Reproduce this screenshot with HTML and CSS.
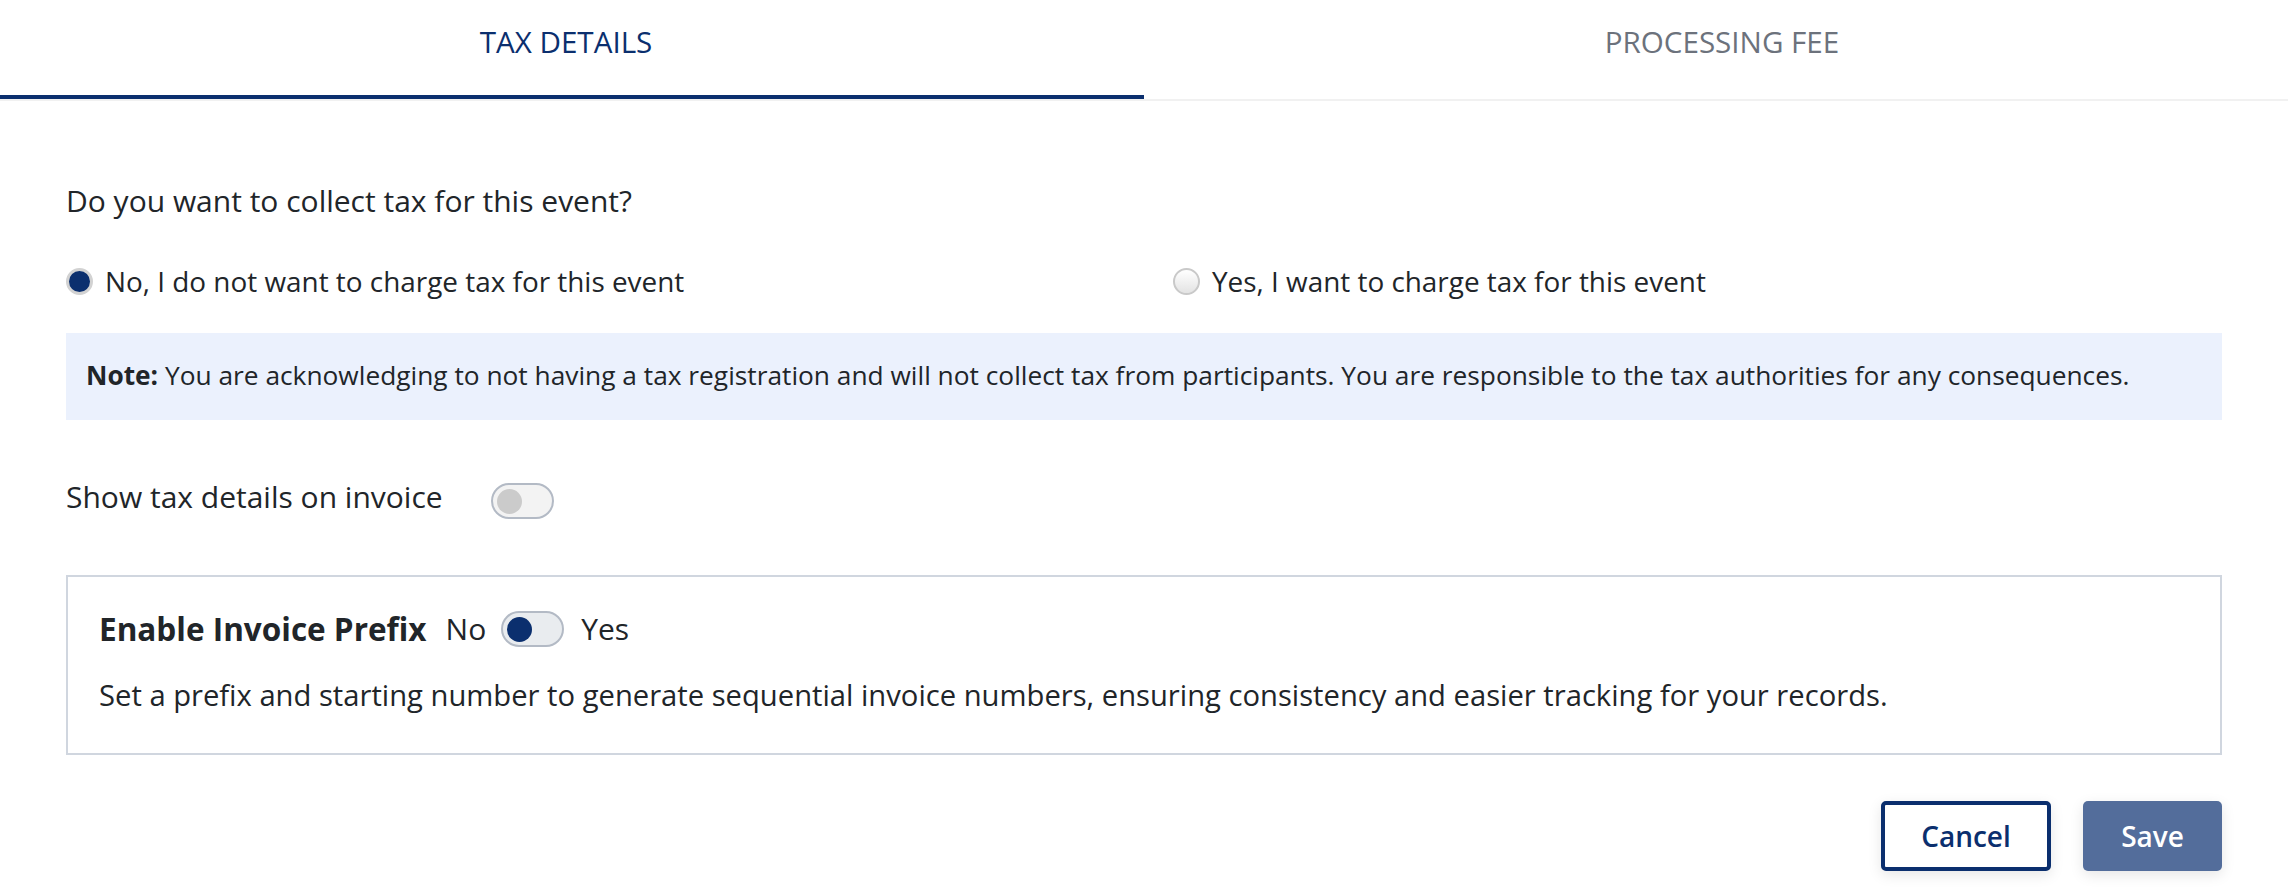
FILE: index.html
```html
<!DOCTYPE html>
<html lang="en">
<head>
<meta charset="utf-8">
<title>Tax Details</title>
<link rel="stylesheet" href="styles.css">
</head>
<body>
<nav class="tabs">
  <div class="tab active">TAX DETAILS</div>
  <div class="tab">PROCESSING FEE</div>
</nav>
<main class="content">
  <p class="question">Do you want to collect tax for this event?</p>
  <div class="radio-grid">
    <label class="radio"><span class="radio-dot checked"></span>No, I do not want to charge tax for this event</label>
    <label class="radio"><span class="radio-dot"></span>Yes, I want to charge tax for this event</label>
  </div>
  <div class="note"><strong>Note:</strong> You are acknowledging to not having a tax registration and will not collect tax from participants. You are responsible to the tax authorities for any consequences.</div>
  <div class="show-row">
    <span class="show-label">Show tax details on invoice</span>
    <span class="switch off"><span class="knob"></span></span>
  </div>
  <section class="prefix-card">
    <div class="prefix-head">
      <span class="prefix-title">Enable Invoice Prefix</span>
      <span class="opt">No</span>
      <span class="switch on"><span class="knob"></span></span>
      <span class="opt">Yes</span>
    </div>
    <p class="prefix-desc">Set a prefix and starting number to generate sequential invoice numbers, ensuring consistency and easier tracking for your records.</p>
  </section>
  <div class="actions">
    <button class="btn btn-outline">Cancel</button>
    <button class="btn btn-primary">Save</button>
  </div>
</main>
</body>
</html>
```
FILE: styles.css
```css
* { box-sizing: border-box; }
html, body { margin: 0; padding: 0; background: #fff; }
body {
  font-family: "Open Sans", Lato, sans-serif;
  color: #212529;
  font-size: 28px;
  line-height: 40px;
}
.tabs {
  display: flex;
  border-bottom: 2px solid #f1f1f1;
}
.tab {
  flex: 1 1 50%;
  height: 99px;
  display: flex;
  align-items: center;
  justify-content: center;
  padding: 0 0 12px 12px;
  font-size: 29.6px;
  color: #6c727c;
  border-bottom: 4px solid transparent;
}
.tab.active {
  padding: 0 12px 12px 0;
  color: #0b2f6e;
  border-bottom-color: #0b2f6e;
}
.content {
  padding: 0 66px 20px;
}
.question {
  margin: 80px 0 0;
  font-size: 30px;
}
.radio-grid {
  display: grid;
  grid-template-columns: 1107px 1fr;
  margin-top: 40px;
  font-size: 27.9px;
}
.radio {
  display: flex;
  align-items: center;
  gap: 12px;
}
.radio-dot {
  width: 27px;
  height: 27px;
  border-radius: 50%;
  border: 2px solid #c9c9c9;
  background: linear-gradient(#ffffff, #e3e3e3);
  flex: none;
}
.radio-dot.checked {
  border: 3px solid #d2d2d2;
  background: #0b2f6e;
}
.note {
  margin-top: 32px;
  background: #ebf1fd;
  padding: 24px 20px 27px;
  font-size: 26.3px;
  line-height: 36px;
}
.note strong { font-weight: 700; }
.show-row {
  display: flex;
  align-items: flex-start;
  gap: 48px;
  margin-top: 57px;
  font-size: 30px;
}
.switch {
  width: 63px;
  height: 36px;
  border-radius: 18px;
  border: 2px solid #b3bac5;
  display: flex;
  align-items: center;
  padding-left: 4px;
  flex: none;
}
.switch .knob {
  width: 25px;
  height: 25px;
  border-radius: 50%;
}
.switch.off { background: #f3f3f3; margin-top: 6px; }
.switch.off .knob { background: #cbcbcb; }
.switch.on { background: #e9ecef; }
.switch.on .knob { background: #0b2f6e; }
.prefix-card {
  margin-top: 56px;
  border: 2px solid #d0d6df;
  padding: 32px 31px 38px;
}
.prefix-head {
  display: flex;
  align-items: center;
  font-size: 30px;
}
.prefix-title {
  font-size: 31.5px;
  font-weight: 700;
  margin-right: 19px;
}
.prefix-head .switch { margin: 0 17px 0 15px; }
.prefix-desc {
  margin: 26px 0 0;
  font-size: 29.2px;
}
.actions {
  display: flex;
  justify-content: flex-end;
  gap: 32px;
  margin-top: 46px;
}
.btn {
  height: 70px;
  border-radius: 5px;
  font-family: "Open Sans", Lato, sans-serif;
  font-size: 28px;
  font-weight: 600;
  box-shadow: 0 4px 14px rgba(0, 0, 0, 0.1);
  cursor: pointer;
}
.btn-outline {
  width: 170px;
  background: #fff;
  border: 4px solid #0b2f6e;
  color: #0b2f6e;
}
.btn-primary {
  width: 139px;
  background: #536d9b;
  border: none;
  color: #fff;
}
```
